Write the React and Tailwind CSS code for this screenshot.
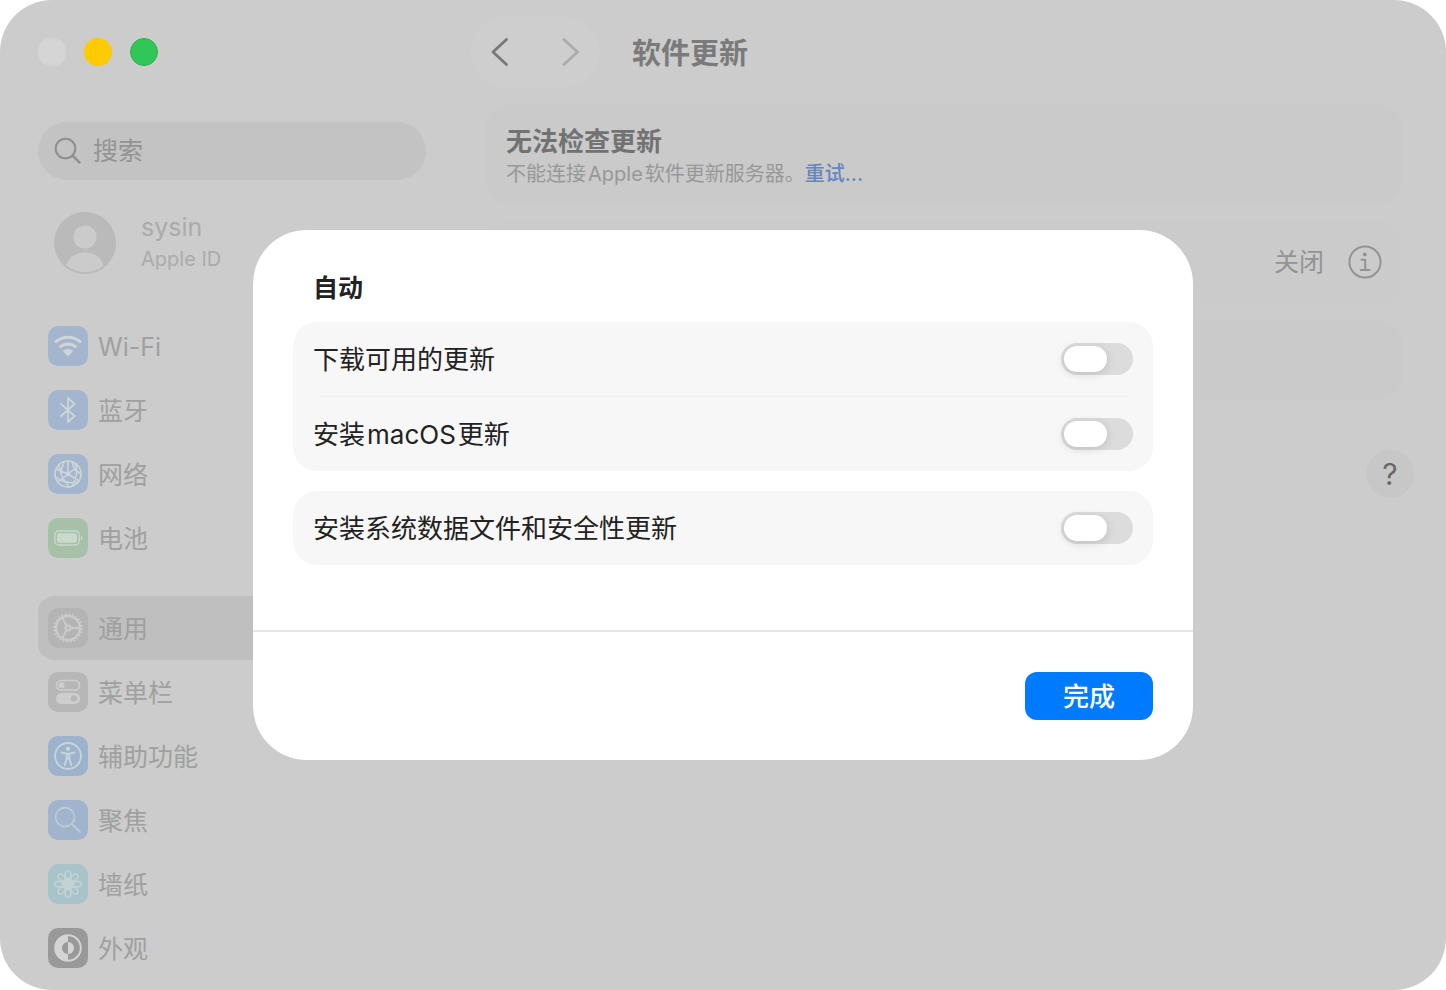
import React, { useState } from "react";

const stroke = {
  fill: "none",
  stroke: "currentColor",
  strokeLinecap: "round",
  strokeLinejoin: "round",
};

function WifiGlyph() {
  return (
    <svg viewBox="0 0 40 40" className="size-10" aria-hidden="true">
      <g {...stroke} strokeWidth="3" strokeLinecap="butt">
        <path d="M7 16.5a18.5 18.5 0 0 1 26 0" />
        <path d="M11.7 21.3a11.8 11.8 0 0 1 16.6 0" />
      </g>
      <path d="M20 30.5l-5.2-5.4a7.4 7.4 0 0 1 10.4 0z" fill="currentColor" />
    </svg>
  );
}

function BluetoothGlyph() {
  return (
    <svg viewBox="0 0 40 40" className="size-10" aria-hidden="true">
      <path {...stroke} strokeWidth="1.8" d="M13 14l13.5 12L20 32V8l6.5 6L13 26" />
    </svg>
  );
}

function NetworkGlyph() {
  return (
    <svg viewBox="0 0 40 40" className="size-10" aria-hidden="true">
      <g {...stroke} strokeWidth="1.6">
        <circle cx="20" cy="20" r="13" />
        <path d="M20 7v13M20 20l-10 8M20 20l11 7M8 15l12 5 10-8M11 11c1 8 3 14 10 22M27 9c3 6 2 15-3 23M7.500 23c6 5 16 7 23 5M16 8l-3 9M24 8l3 8 6 4" />
      </g>
      <circle cx="20" cy="20" r="2.400" fill="currentColor" />
    </svg>
  );
}

function BatteryGlyph() {
  return (
    <svg viewBox="0 0 40 40" className="size-10" aria-hidden="true">
      <rect x="6.800" y="13" width="24.500" height="14" rx="4" {...stroke} strokeWidth="1.400" />
      <rect x="9" y="15.200" width="20" height="9.600" rx="2.200" fill="currentColor" />
      <path d="M33 17.500c1.800.6 1.800 4.400 0 5z" fill="currentColor" />
    </svg>
  );
}

function GearGlyph() {
  return (
    <svg viewBox="0 0 40 40" className="size-10" aria-hidden="true">
      <circle cx="20" cy="20" r="14" {...stroke} strokeWidth="1.600" strokeDasharray="1.800 1.865" strokeLinecap="butt" />
      <circle cx="20" cy="20" r="12" {...stroke} strokeWidth="2.400" />
      <g {...stroke} strokeWidth="2">
        <path d="M22.500 20H31M18.700 17.800L14.500 10.500M18.700 22.200l-4.200 7.300" />
        <circle cx="20" cy="20" r="2.600" />
      </g>
    </svg>
  );
}

function MenuBarGlyph() {
  return (
    <svg viewBox="0 0 40 40" className="size-10" aria-hidden="true">
      <rect x="8.500" y="8.500" width="23" height="9.500" rx="4.750" {...stroke} strokeWidth="1.600" />
      <circle cx="13.500" cy="13.250" r="3" fill="currentColor" />
      <path
        fillRule="evenodd"
        fill="currentColor"
        d="M13.500 21h13a5.500 5.500 0 0 1 0 11h-13a5.500 5.500 0 0 1 0-11zm12.500 2.200a3.300 3.300 0 1 0 0 6.600a3.300 3.300 0 0 0 0-6.600z"
      />
    </svg>
  );
}

function AccessibilityGlyph() {
  return (
    <svg viewBox="0 0 40 40" className="size-10" aria-hidden="true">
      <circle cx="20" cy="20" r="13" {...stroke} strokeWidth="1.800" />
      <circle cx="20" cy="12.800" r="2.200" fill="currentColor" />
      <path {...stroke} strokeWidth="2" d="M13.500 16.500l5 1.200h3l5-1.200M18.700 18v5l-2 6M21.300 18v5l2 6M18.700 22h2.600" />
    </svg>
  );
}

function SpotlightGlyph() {
  return (
    <svg viewBox="0 0 40 40" className="size-10" aria-hidden="true">
      <circle cx="17" cy="17" r="9.500" {...stroke} strokeWidth="1.800" />
      <path d="M24 24l8 8" {...stroke} strokeWidth="1.800" />
    </svg>
  );
}

function WallpaperGlyph() {
  return (
    <svg viewBox="0 0 40 40" className="size-10" aria-hidden="true">
      <g {...stroke} strokeWidth="1.600">
        {[0, 45, 90, 135, 180, 225, 270, 315].map((angle) => (
          <ellipse key={angle} cx="20" cy="10.800" rx="2.800" ry="4" transform={`rotate(${angle} 20 20)`} />
        ))}
      </g>
      <circle cx="20" cy="20" r="5.500" fill="currentColor" />
    </svg>
  );
}

function AppearanceGlyph() {
  return (
    <svg viewBox="0 0 40 40" className="size-10" aria-hidden="true">
      <circle cx="20" cy="20" r="12.800" {...stroke} strokeWidth="2" />
      <path d="M20 7a13 13 0 0 0 0 26v-7a6 6 0 0 1 0-12z" fill="currentColor" />
      <path d="M20 14a6 6 0 0 1 0 12z" fill="currentColor" />
    </svg>
  );
}

const groups = [
  [
    { label: "Wi-Fi", Glyph: WifiGlyph, tile: "bg-[#a3b6cd] text-[#cdd5d8]" },
    { label: "蓝牙", Glyph: BluetoothGlyph, tile: "bg-[#a3b6cd] text-[#cdd5d8]" },
    { label: "网络", Glyph: NetworkGlyph, tile: "bg-[#a3b6cd] text-[#cdd5d8]" },
    { label: "电池", Glyph: BatteryGlyph, tile: "bg-[#a6c1a8] text-[#cbd8cc]" },
  ],
  [
    { label: "通用", Glyph: GearGlyph, tile: "bg-[#b4b4b4] text-[#cbcbcb]", selected: true },
    { label: "菜单栏", Glyph: MenuBarGlyph, tile: "bg-[#b7b7b7] text-[#cecece]" },
    { label: "辅助功能", Glyph: AccessibilityGlyph, tile: "bg-[#9db3cc] text-[#c8d4db]" },
    { label: "聚焦", Glyph: SpotlightGlyph, tile: "bg-[#a1b4cd] text-[#bccad6]" },
    { label: "墙纸", Glyph: WallpaperGlyph, tile: "bg-[#a8c4ca] text-[#c3d3d4]" },
    { label: "外观", Glyph: AppearanceGlyph, tile: "bg-[#999999] text-[#d4d4d4]" },
  ],
];

function SidebarItem({ label, Glyph, tile, selected }) {
  return (
    <li>
      <a
        href="#"
        aria-current={selected ? "page" : undefined}
        className={`flex h-16 items-center gap-2.5 rounded-2xl px-2.5 text-[#a0a0a0] ${selected ? "bg-[#bfbfbf]" : ""}`}
      >
        <span className={`size-10 rounded-[10px] ${tile}`}>
          <Glyph />
        </span>
        <span className="pt-0.5 text-[25px] leading-8">{label}</span>
      </a>
    </li>
  );
}

function Sidebar() {
  return (
    <aside className="w-[464px] shrink-0 px-[38px] pt-[38px] pb-2.5">
      <div className="flex gap-[18px]">
        <button aria-label="关闭窗口" className="size-7 rounded-full bg-[#d5d5d5]" />
        <button aria-label="最小化" className="size-7 rounded-full bg-[#fccb03]" />
        <button aria-label="缩放" className="size-7 rounded-full border border-[#2bb24c] bg-[#32c558]" />
      </div>

      <label className="mt-14 flex h-[58px] items-center gap-[11px] rounded-full bg-[#c3c3c3] px-4 text-[#8e8e8e]">
        <svg viewBox="0 0 28 28" className="size-7 shrink-0" aria-hidden="true">
          <circle cx="11.500" cy="11.500" r="9.800" {...stroke} strokeWidth="2" />
          <path d="M18.700 18.700L25.500 25.500" {...stroke} strokeWidth="2.400" />
        </svg>
        <input
          type="search"
          placeholder="搜索"
          aria-label="搜索"
          className="w-full min-w-0 bg-transparent text-[25px] leading-8 outline-none placeholder:text-[#939393]"
        />
      </label>

      <a href="#" className="mt-[31px] flex h-16 items-center gap-6 px-4">
        <svg viewBox="0 0 64 64" className="-ml-px size-16 shrink-0" aria-hidden="true">
          <circle cx="32" cy="32" r="31" fill="#bababa" />
          <circle cx="32" cy="26" r="11.500" fill="#cbcbcb" />
          <path d="M13.500 54.500C16 45 24 41.500 32 41.500s16 3.500 18.500 13C45 59 39 61 32 61s-13-2-18.500-6.500z" fill="#cbcbcb" />
        </svg>
        <span className="flex flex-col text-[#ababab]">
          <span className="text-[25px] leading-8">sysin</span>
          <span className="text-xl leading-8">Apple ID</span>
        </span>
      </a>

      <nav className="mt-[39px] flex flex-col gap-[26px]">
        {groups.map((items, i) => (
          <ul key={i}>
            {items.map((item) => (
              <SidebarItem key={item.label} {...item} />
            ))}
          </ul>
        ))}
      </nav>
    </aside>
  );
}

function MainPane() {
  return (
    <main className="min-w-0 flex-1 pt-4 pr-8 pl-[22px]">
      <header className="flex items-center gap-8">
        <div className="-ml-4 flex h-[72px] w-[130px] items-center justify-between rounded-full bg-[#cecece] px-[18px]">
          <button aria-label="后退" className="text-[#777777]">
            <svg viewBox="0 0 24 32" className="h-8 w-6" aria-hidden="true">
              <path d="M18.500 3.500L5 16l13.500 12.500" {...stroke} strokeWidth="2.800" />
            </svg>
          </button>
          <button aria-label="前进" className="text-[#acacac]">
            <svg viewBox="0 0 24 32" className="h-8 w-6" aria-hidden="true">
              <path d="M6 3.500L19.500 16L6 28.500" {...stroke} strokeWidth="2.800" />
            </svg>
          </button>
        </div>
        <h1 className="pt-1 text-[29px] leading-10 font-bold text-[#7a7a7a]">软件更新</h1>
      </header>

      <div className="mt-4 flex flex-col gap-4 pr-3">
        <section className="h-[100px] rounded-3xl bg-[#cacaca] px-5 pt-5">
          <h2 className="text-[26px] leading-9 font-bold text-[#727272]">无法检查更新</h2>
          <p className="text-[20px] leading-7 text-[#989898]">
            不能连接<span className="mx-0.5">Apple</span>软件更新服务器。
            <a href="#" className="font-medium text-[#6585bd]">
              重试...
            </a>
          </p>
        </section>
        <section className="flex h-[84px] items-center justify-end gap-6 rounded-3xl bg-[#cbcbcb] px-5">
          <span className="text-[25px] leading-8 text-[#939393]">关闭</span>
          <button aria-label="详细信息" className="text-[#939393]">
            <svg viewBox="0 0 34 34" className="size-[34px]" aria-hidden="true">
              <circle cx="17" cy="17" r="15.600" {...stroke} strokeWidth="2" />
              <circle cx="16.800" cy="9.400" r="1.900" fill="currentColor" />
              <path d="M13.500 14.800h3.700v10M12.800 25h8.800" {...stroke} strokeWidth="2" />
            </svg>
          </button>
        </section>
        <section className="h-20 rounded-3xl bg-[#cacaca]" />
      </div>

      <div className="mt-[50px] flex justify-end">
        <button aria-label="帮助" className="size-12 rounded-full bg-[#c7c7c7] text-[30px] leading-[48px] text-[#686868]">
          ?
        </button>
      </div>
    </main>
  );
}

function SwitchRow({ id, children }) {
  const [on, setOn] = useState(false);
  return (
    <div className="flex h-[74px] items-center justify-between px-5">
      <label htmlFor={id} className="pt-0.5 text-[26px] leading-9 text-[#222222]">
        {children}
      </label>
      <input
        id={id}
        type="checkbox"
        role="switch"
        checked={on}
        onChange={() => setOn(!on)}
        className="flex h-8 w-[72px] appearance-none items-center rounded-full bg-[#dcdcdc] px-[3px] before:h-[26px] before:w-[43px] before:rounded-full before:bg-white before:shadow-[0_2px_10px_rgba(0,0,0,0.14)] checked:justify-end checked:bg-[#007aff]"
      />
    </div>
  );
}

function UpdateDialog() {
  return (
    <div className="absolute inset-0 flex items-center justify-center">
      <div
        role="dialog"
        aria-labelledby="auto-title"
        className="w-full max-w-[940px] overflow-hidden rounded-[54px] bg-white"
      >
        <div className="px-10 pt-10 pb-[65px]">
          <h2 id="auto-title" className="px-5 text-[25px] leading-9 font-bold text-[#222222]">
            自动
          </h2>
          <div className="mt-4 rounded-3xl bg-[#f7f7f7]">
            <SwitchRow id="download">下载可用的更新</SwitchRow>
            <hr className="mx-6 border-t border-[#f2f2f2]" />
            <SwitchRow id="install-os">
              安装<span className="mx-0.5">macOS</span>更新
            </SwitchRow>
          </div>
          <div className="mt-5 rounded-3xl bg-[#f7f7f7]">
            <SwitchRow id="install-data">安装系统数据文件和安全性更新</SwitchRow>
          </div>
        </div>
        <div className="flex justify-end border-t-2 border-[#e6e6e6] px-10 py-10">
          <button className="h-12 w-32 rounded-xl bg-[#007aff] pt-0.5 text-[26px] leading-9 font-medium text-white">
            完成
          </button>
        </div>
      </div>
    </div>
  );
}

export default function App() {
  return (
    <div className="min-h-screen bg-white font-['Inter','Noto_Sans_CJK_SC',sans-serif]">
      <div className="relative flex min-h-screen overflow-hidden rounded-[52px] bg-[#cccccc]">
        <Sidebar />
        <MainPane />
        <UpdateDialog />
      </div>
    </div>
  );
}
